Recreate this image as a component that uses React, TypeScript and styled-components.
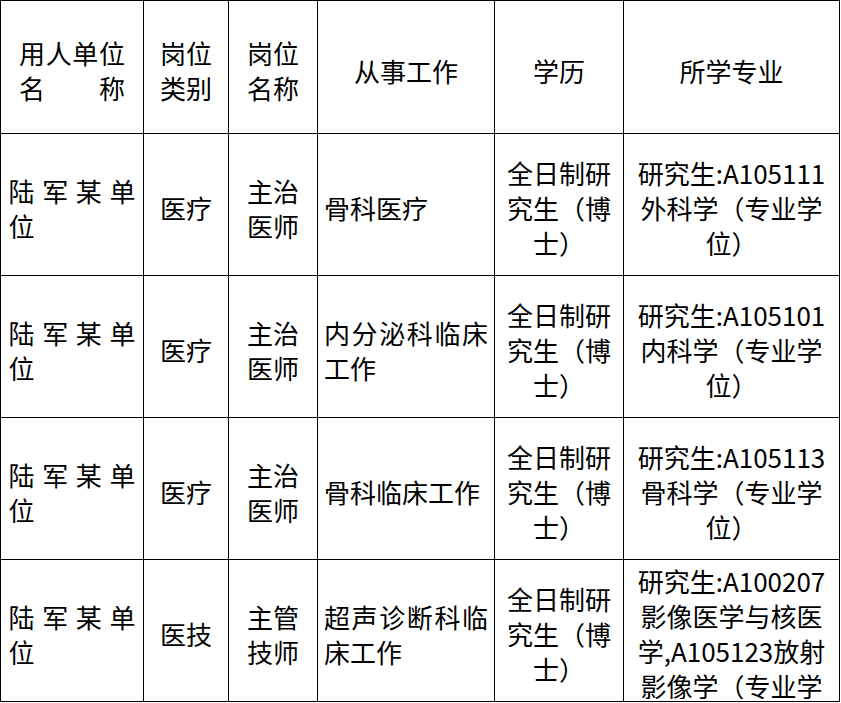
import styled, { createGlobalStyle } from 'styled-components'

const GlobalStyle = createGlobalStyle`
    html, body {
        margin: 0;
        padding: 0;
        background: #fff;
    }
    body {
        font-family: "Noto Sans CJK SC", "Noto Sans", sans-serif;
        color: #000;
    }
`

const Table = styled.table`
    border-collapse: collapse;
    table-layout: fixed;
    width: 840px;
    font-size: 26px;
    line-height: 35px;
`

const HeadRow = styled.tr`
    height: 133px;
`

const BodyRow = styled.tr`
    height: 142px;
`

type Align = 'center' | 'left' | 'spread' | 'justify'

const Cell = styled.td<{ $align?: Align; $top?: boolean; $px?: number }>`
    border: 1px solid #000;
    padding: ${p => (p.$top ? '3px' : '6px')} ${p => p.$px ?? 8}px 0;
    vertical-align: ${p => (p.$top ? 'top' : 'middle')};
    text-align: ${p => (p.$align === 'spread' || p.$align === 'justify' ? 'justify' : p.$align ?? 'center')};
    text-align-last: ${p => (p.$align === 'spread' ? 'justify' : 'auto')};
    overflow: hidden;
    word-break: normal;
`

const Clip = styled.div`
    height: 136px;
    overflow: hidden;
`

const columns = [143, 85, 89, 177, 129, 216]

interface Job {
    unit: string
    category: string
    post: string
    work: string
    degree: string
    major: string
}

const jobs: Job[] = [
    {
        unit: '陆军某单位',
        category: '医疗',
        post: '主治医师',
        work: '骨科医疗',
        degree: '全日制研究生（博士）',
        major: '研究生:A105111外科学（专业学位）',
    },
    {
        unit: '陆军某单位',
        category: '医疗',
        post: '主治医师',
        work: '内分泌科临床工作',
        degree: '全日制研究生（博士）',
        major: '研究生:A105101内科学（专业学位）',
    },
    {
        unit: '陆军某单位',
        category: '医疗',
        post: '主治医师',
        work: '骨科临床工作',
        degree: '全日制研究生（博士）',
        major: '研究生:A105113骨科学（专业学位）',
    },
    {
        unit: '陆军某单位',
        category: '医技',
        post: '主管技师',
        work: '超声诊断科临床工作',
        degree: '全日制研究生（博士）',
        major: '研究生:A100207影像医学与核医学,A105123放射影像学（专业学位）',
    },
]

const App = () => {
    return (
        <>
            <GlobalStyle />
            <Table>
                <colgroup>
                    {columns.map((w, i) => (
                        <col key={i} style={{ width: w }} />
                    ))}
                </colgroup>
                <thead>
                    <HeadRow>
                        <Cell $align='spread' $px={18}>用人单位名称</Cell>
                        <Cell>岗位类别</Cell>
                        <Cell>岗位名称</Cell>
                        <Cell>从事工作</Cell>
                        <Cell>学历</Cell>
                        <Cell>所学专业</Cell>
                    </HeadRow>
                </thead>
                <tbody>
                    {jobs.map((job, i) => {
                        const last = i === jobs.length - 1
                        return (
                            <BodyRow key={i}>
                                <Cell $align='justify' $px={7.5}>{job.unit}</Cell>
                                <Cell>{job.category}</Cell>
                                <Cell>{job.post}</Cell>
                                <Cell $align='justify' $px={6}>{job.work}</Cell>
                                <Cell $px={7}>{job.degree}</Cell>
                                {last
                                    ? <Cell $top $px={10}><Clip>{job.major}</Clip></Cell>
                                    : <Cell $px={10}>{job.major}</Cell>}
                            </BodyRow>
                        )
                    })}
                </tbody>
            </Table>
        </>
    )
}

export default App
